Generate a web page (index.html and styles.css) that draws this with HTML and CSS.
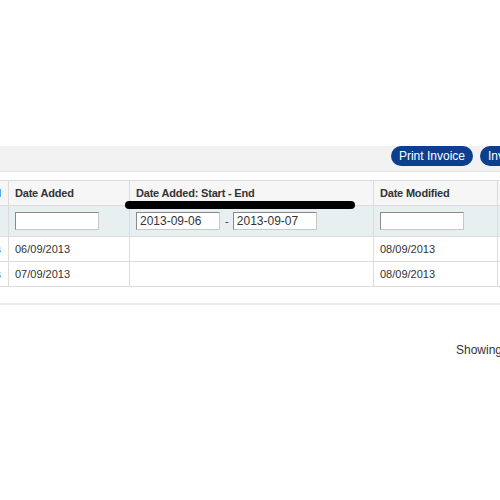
FILE: index.html
```html
<!DOCTYPE html>
<html lang="en">
<head>
  <meta charset="UTF-8" />
  <title>Orders</title>
  <link rel="stylesheet" href="styles.css">
</head>
<body>
  <div class="page">
    <div class="toolbar">
      <button class="btn">Print Invoice</button>
      <button class="btn">Invoice</button>
    </div>

    <div class="grid-wrap">
      <table class="grid">
        <tr class="head">
          <th class="col-id"><a href="#">ld</a></th>
          <th class="col-added">Date Added</th>
          <th class="col-range">Date Added: Start - End</th>
          <th class="col-mod">Date Modified</th>
          <th class="col-more"></th>
        </tr>
        <tr class="filter">
          <td class="col-id"></td>
          <td><input type="text" class="field"></td>
          <td>
            <input type="text" class="field" value="2013-09-06">
            <span class="dash">-</span>
            <input type="text" class="field" value="2013-09-07">
          </td>
          <td><input type="text" class="field"></td>
          <td></td>
        </tr>
        <tr>
          <td class="col-id"><a href="#">s</a></td>
          <td>06/09/2013</td>
          <td></td>
          <td>08/09/2013</td>
          <td></td>
        </tr>
        <tr>
          <td class="col-id"><a href="#">s</a></td>
          <td>07/09/2013</td>
          <td></td>
          <td>08/09/2013</td>
          <td></td>
        </tr>
      </table>
      <!-- marker stroke drawn over the header -->
      <div class="marker"></div>
    </div>

    <div class="pager">
      <span class="showing">Showing</span>
    </div>
  </div>
</body>
</html>
```

FILE: styles.css
```css
* {
  box-sizing: border-box;
  margin: 0;
  padding: 0;
}

body {
  font-family: "Liberation Sans", Arial, sans-serif;
  font-size: 11px;
  color: #333;
  background: #fff;
  overflow: hidden;
  width: 500px;
  height: 500px;
}

.page {
  padding-top: 146px;
  width: 560px;
}

.toolbar {
  display: flex;
  justify-content: flex-end;
  gap: 7px;
  height: 26px;
  padding-right: 26px;
  background: #f2f2f2;
  border-bottom: 1px solid #e4e4e4;
}

.btn {
  height: 20px;
  padding: 0 8px;
  border: none;
  border-radius: 10px;
  background: #0d3f8f;
  color: #fff;
  font-family: "Liberation Sans", Arial, sans-serif;
  font-size: 12px;
  cursor: pointer;
}

.grid-wrap {
  position: relative;
  margin-top: 8px;
  margin-left: -23px;
}

.grid {
  border-collapse: collapse;
  width: 590px;
}

.grid th,
.grid td {
  border: 1px solid #dcdcdc;
  padding: 0 6px;
  text-align: left;
  vertical-align: middle;
  white-space: nowrap;
}

.grid tr {
  height: 25px;
}

.grid .filter {
  height: 31px;
}

.head th {
  background: #f6f6f6;
  font-weight: bold;
  font-size: 11px;
  letter-spacing: -0.2px;
  color: #333;
}

.filter td {
  background: #e8eff0;
}

.grid .col-id {
  width: 31px;
  text-align: right;
  padding-right: 7px;
}

.col-id a {
  color: #2a6cc0;
  text-decoration: none;
}

.col-added {
  width: 121px;
}

.col-range {
  width: 244px;
}

.col-mod {
  width: 124px;
}

.field {
  width: 84px;
  height: 18px;
  padding: 0 3px;
  border: 1px solid #c8c8c8;
  border-top-color: #8a8a8a;
  border-left-color: #8a8a8a;
  background: #fff;
  font-family: "Liberation Sans", Arial, sans-serif;
  font-size: 12px;
  color: #333;
  vertical-align: middle;
}

.dash {
  display: inline-block;
  padding: 0 1px 0 2px;
  vertical-align: middle;
}

.marker {
  position: absolute;
  left: 148px;
  top: 21px;
  width: 230px;
  height: 8px;
  border-radius: 4px;
  background: #000;
}

.pager {
  margin-top: 16px;
  border-top: 2px solid #ececec;
  padding: 38px 0 0 456px;
}

.showing {
  font-size: 12px;
  color: #333;
}
```
